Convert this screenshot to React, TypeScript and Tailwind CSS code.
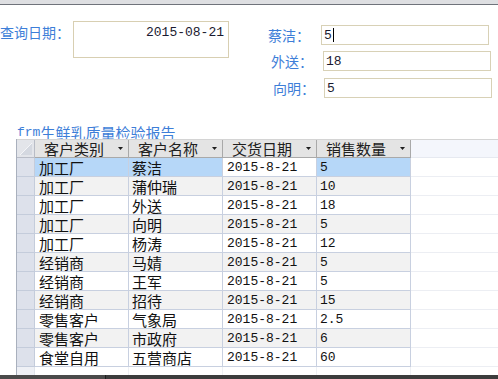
import React from 'react'

const rows = [
  ['加工厂', '蔡洁', '2015-8-21', '5'],
  ['加工厂', '蒲仲瑞', '2015-8-21', '10'],
  ['加工厂', '外送', '2015-8-21', '18'],
  ['加工厂', '向明', '2015-8-21', '5'],
  ['加工厂', '杨涛', '2015-8-21', '12'],
  ['经销商', '马婧', '2015-8-21', '5'],
  ['经销商', '王军', '2015-8-21', '5'],
  ['经销商', '招待', '2015-8-21', '15'],
  ['零售客户', '气象局', '2015-8-21', '2.5'],
  ['零售客户', '市政府', '2015-8-21', '6'],
  ['食堂自用', '五营商店', '2015-8-21', '60'],
]

const headers = ['客户类别', '客户名称', '交货日期', '销售数量']

const cjk = "font-['Noto_Sans_CJK_SC',sans-serif]"
const mono = "font-['Liberation_Mono','Noto_Sans_CJK_SC',monospace]"

function Arrow() {
  return (
    <svg width="5" height="3" viewBox="0 0 5 3" className="shrink-0">
      <polygon points="0,0 5,0 2.5,3" fill="#1e1e1e" />
    </svg>
  )
}

function Field({ value, cursor }: { value: string; cursor?: boolean }) {
  return (
    <div className="w-[168px] h-[20px] border border-[#d8d1b6] bg-white flex items-center pl-[2px]">
      <span className={`${mono} text-[13px] leading-none text-[#1a1a30]`}>{value}</span>
      {cursor && <span className="w-px h-[14px] bg-black ml-px" />}
    </div>
  )
}

export default function App() {
  return (
    <div className={`w-[498px] h-[379px] bg-white overflow-hidden flex flex-col ${cjk}`}>
      <div className="h-[4px] shrink-0 bg-[#dedfe2]" />
      <div className="h-px shrink-0 bg-[#6f737b]" />

      {/* query area */}
      <div className="h-[121px] shrink-0 flex">
        <div className="flex items-start mt-[16px]">
          <div className="w-[73px] mt-[2px] text-[14px] leading-[18px] text-[#3d7ed8] whitespace-nowrap">查询日期：</div>
          <div className="w-[156px] h-[37px] border border-[#d8cfb2] flex justify-end pr-[4px] pt-[4px]">
            <span className={`${mono} text-[13px] leading-[14px] text-[#1a1a30]`}>2015-08-21</span>
          </div>
        </div>
        <div className="ml-[39px] mt-[20px] flex flex-col">
          <div className="flex items-center">
            <div className="w-[53px] text-[14px] leading-none text-[#3d7ed8] whitespace-nowrap">蔡洁：</div>
            <Field value="5" cursor />
          </div>
          <div className="flex items-center mt-[6px] pl-[3px]">
            <div className="w-[52px] text-[14px] leading-none text-[#3d7ed8] whitespace-nowrap">外送：</div>
            <Field value="18" />
          </div>
          <div className="flex items-center mt-[7px] pl-[5px]">
            <div className="w-[51px] text-[14px] leading-none text-[#3d7ed8] whitespace-nowrap">向明：</div>
            <Field value="5" />
          </div>
        </div>
      </div>

      {/* subform title */}
      <div className="h-[13px] shrink-0 pl-[17px] flex items-end text-[#3d7ed8] whitespace-nowrap">
        <span className={`${mono} text-[13px] leading-[13px]`}>frm</span>
        <span className="text-[15px] leading-[13px]">生鲜乳质量检验报告</span>
      </div>

      {/* datasheet */}
      <div className="ml-[16px] flex-1 flex flex-col border-l border-[#a9b0bd]">
        <div className="h-[19px] shrink-0 grid grid-cols-[18px_94px_94px_94px_94px_1fr] border-t border-[#d4d4d4]">
          <div className="bg-[#e3e5ea] border-r border-b border-[#b8bcc6] flex items-end justify-end pr-[2px] pb-[2px]">
            <svg width="12" height="12" viewBox="0 0 12 12">
              <polygon points="0,12 12,0 12,12" fill="#d4d8e0" />
              <line x1="0" y1="12" x2="12" y2="0" stroke="#f4f5f8" strokeWidth="1" />
            </svg>
          </div>
          {headers.map((h) => (
            <div key={h} className="bg-[#e4e4e4] border-r border-b border-[#a9a9a9] flex items-center justify-between pl-[9px] pr-[5px]">
              <span className="text-[15px] leading-none text-[#202020]">{h}</span>
              <Arrow />
            </div>
          ))}
          <div className="bg-[#f4f6fc] border-b border-[#e6e9f0]" />
        </div>

        {rows.map((r, i) => {
          const sel = i === 0
          const bg = sel ? 'bg-[#b6d7f8]' : i % 2 === 1 ? 'bg-[#f2f2f2]' : 'bg-white'
          return (
            <div key={i} className="h-[19px] shrink-0 grid grid-cols-[18px_94px_94px_94px_94px_1fr]">
              <div className="bg-[#dde1eb] border-r border-b border-[#c4ccdb]" />
              <div className={`${bg} border-r border-b border-[#c8d0e0] flex items-center pl-[4px] text-[15px] leading-none text-[#111]`}>{r[0]}</div>
              <div className={`${bg} border-r border-b border-[#c8d0e0] flex items-center pl-[3px] text-[15px] leading-none text-[#111]`}>{r[1]}</div>
              <div className={`${sel ? 'bg-white' : bg} border-r border-b border-[#c8d0e0] flex items-center pl-[4px] ${mono} text-[13px] leading-none text-[#111]`}>{r[2]}</div>
              <div className={`${bg} border-r border-b border-[#c8d0e0] flex items-center pl-[3px] ${mono} text-[13px] leading-none text-[#111]`}>{r[3]}</div>
              <div className="bg-white border-b border-[#eceef3]" />
            </div>
          )
        })}

        <div className="flex-1 grid grid-cols-[18px_94px_94px_94px_94px_1fr]">
          <div className="bg-[#eef0f5] border-r border-[#dfe3ea]" />
          <div className="border-r border-[#eef0f4]" />
          <div className="border-r border-[#eef0f4]" />
          <div className="border-r border-[#eef0f4]" />
          <div className="border-r border-[#eef0f4]" />
          <div />
        </div>
      </div>

      <div className="h-[4px] shrink-0 bg-[#3c3c3c] flex">
        <div className="w-[105px] bg-[#4a4a4a]" />
        <div className="w-px bg-[#1e1e1e]" />
      </div>
    </div>
  )
}
